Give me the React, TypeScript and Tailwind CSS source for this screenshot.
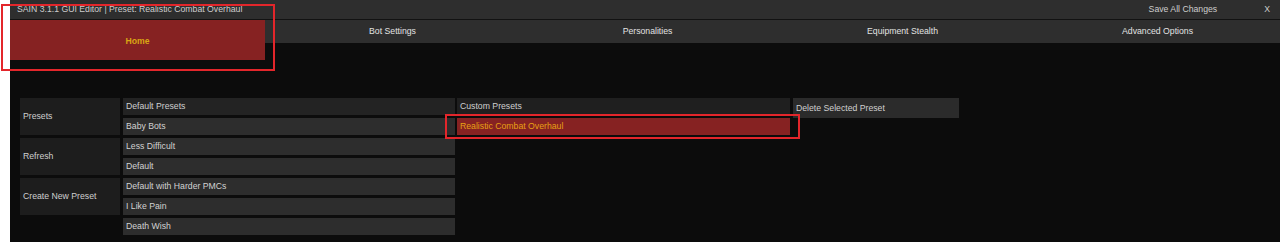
const tabs = ['Home', 'Bot Settings', 'Personalities', 'Equipment Stealth', 'Advanced Options'];

const defaultPresets = [
  'Baby Bots',
  'Less Difficult',
  'Default',
  'Default with Harder PMCs',
  'I Like Pain',
  'Death Wish',
];

const sideButtons = ['Presets', 'Refresh', 'Create New Preset'];

export default function App() {
  return (
    <div
      className="relative w-[1280px] h-[246px] bg-white overflow-hidden"
      style={{ fontFamily: '"Liberation Sans", Arial, sans-serif' }}
    >
      <div className="ml-[10px] w-[1270px] h-[242px] bg-[#0c0c0c] text-[8.7px] overflow-hidden">
        {/* title bar */}
        <div className="flex items-center justify-between h-[20px] pt-px bg-[#2e2e2e] border-b border-[#121212] pl-[7px] pr-[10px] text-[#cdcdcd]">
          <span>SAIN 3.1.1 GUI Editor | Preset: Realistic Combat Overhaul</span>
          <div className="flex items-center">
            <span>Save All Changes</span>
            <span className="ml-[47px]">X</span>
          </div>
        </div>

        {/* tabs */}
        <div className="flex items-start h-[23px] bg-[#2e2e2e]">
          {tabs.map((t, i) =>
            i === 0 ? (
              <div
                key={t}
                className="w-[255px] h-[40px] pt-[3px] shrink-0 flex items-center justify-center bg-[#862222] text-[#d9a514] font-bold"
              >
                {t}
              </div>
            ) : (
              <div
                key={t}
                className="w-[255px] h-[23px] pt-px shrink-0 flex items-center justify-center text-[#e2e2e2]"
              >
                {t}
              </div>
            )
          )}
        </div>

        {/* presets panel */}
        <div className="flex items-start mt-[55px] pl-[10px]">
          <div className="flex flex-col gap-[3px] w-[100px]">
            {sideButtons.map((b) => (
              <div key={b} className="h-[37px] flex items-center px-[3px] pt-px bg-[#1d1d1d] text-[#cfcfcf]">
                {b}
              </div>
            ))}
          </div>

          <div className="flex flex-col gap-[3px] w-[332px] ml-[3px]">
            <div className="h-[17px] flex items-center px-[3px] pt-px bg-[#232323] text-[#cfcfcf]">Default Presets</div>
            {defaultPresets.map((p) => (
              <div key={p} className="h-[17px] flex items-center px-[3px] pt-px bg-[#2d2d2d] text-[#d2d2d2]">
                {p}
              </div>
            ))}
          </div>

          <div className="flex flex-col gap-[3px] w-[333px] ml-[2px]">
            <div className="h-[17px] flex items-center px-[3px] pt-px bg-[#1f1f1f] text-[#cfcfcf]">Custom Presets</div>
            <div className="h-[17px] flex items-center px-[3px] pt-px bg-[#862222] text-[#e6a014]">
              Realistic Combat Overhaul
            </div>
          </div>

          <div className="w-[166px] h-[20px] ml-[3px] flex items-center px-[3px] pt-[2px] bg-[#2b2b2b] text-[#d0d0d0]">
            Delete Selected Preset
          </div>
        </div>
      </div>

      {/* annotation boxes */}
      <div className="absolute left-[1px] top-[4px] w-[274px] h-[67px] border-2 border-[#e3262b]" />
      <div className="absolute left-[445px] top-[114px] w-[355px] h-[25px] border-2 border-[#e3262b]" />
    </div>
  );
}
